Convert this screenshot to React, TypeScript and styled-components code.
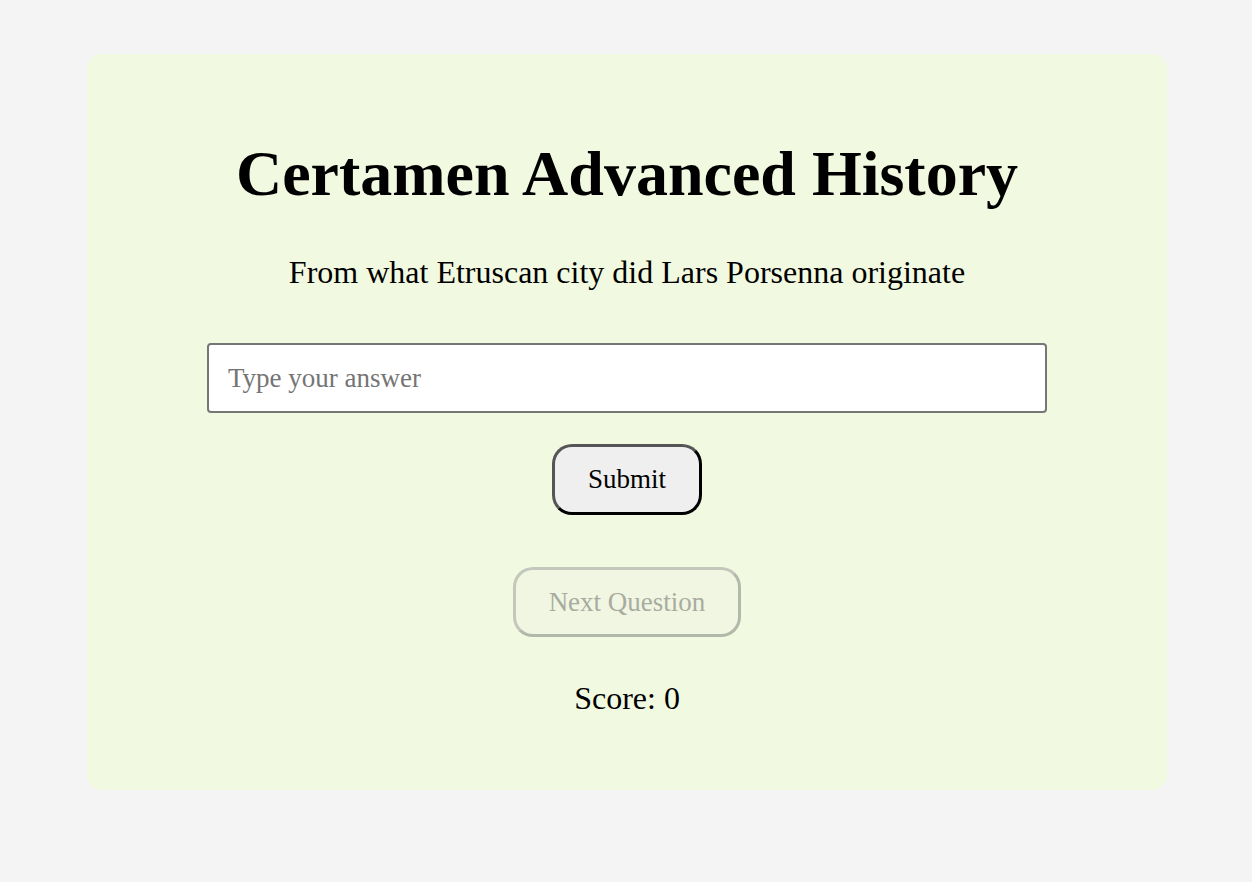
import styled, { createGlobalStyle } from 'styled-components';

const GlobalStyle = createGlobalStyle`
  html, body {
    margin: 0;
    padding: 0;
    background: #f4f4f4;
    font-family: "Liberation Serif", "Times New Roman", serif;
  }
`;

export default function App() {
  return (
    <>
      <GlobalStyle />
      <Page>
        <Card>
          <Title>Certamen Advanced History</Title>
          <Question>From what Etruscan city did Lars Porsenna originate</Question>
          <AnswerInput type="text" placeholder="Type your answer" />
          <ActionButton>Submit</ActionButton>
          <ActionButton disabled $spaced>Next Question</ActionButton>
          <Score>Score: 0</Score>
        </Card>
      </Page>
    </>
  );
}

const Page = styled.div`
  display: flex;
  justify-content: center;
  padding: 54px 0 94px 2px;
`;

const Card = styled.div`
  width: 1080px;
  box-sizing: border-box;
  background: #f2f9e1;
  border-radius: 15px;
  padding: 40px 40px 74px;
  display: flex;
  flex-direction: column;
  align-items: center;
`;

const Title = styled.h1`
  font-size: 64px;
  font-weight: bold;
  margin: 43px 0 0;
  line-height: 74px;
  color: #000;
`;

const Question = styled.p`
  font-size: 32px;
  margin: 43px 0 0;
  line-height: 36px;
  color: #000;
`;

const AnswerInput = styled.input`
  margin-top: 53px;
  width: 840px;
  height: 70px;
  box-sizing: border-box;
  border: 2px solid #767676;
  border-radius: 4px;
  background: #fff;
  padding: 0 19px;
  font-family: "Liberation Serif", "Times New Roman", serif;
  font-size: 27px;
  color: #000;
  outline: none;

  &::placeholder {
    color: #757575;
  }
`;

const ActionButton = styled.button<{ $spaced?: boolean }>`
  margin-top: ${p => (p.$spaced ? '52px' : '31px')};
  height: 71px;
  padding: 0 33px;
  box-sizing: border-box;
  border: 3px solid;
  border-color: #555 #000 #000 #555;
  border-radius: 20px;
  background: #efefef;
  font-family: "Liberation Serif", "Times New Roman", serif;
  font-size: 27px;
  color: #000;
  cursor: pointer;

  &:disabled {
    height: 70px;
    border-color: #c4c7bc #b4b8aa #b4b8aa #c4c7bc;
    background: #f1f6e3;
    color: #a8ac9f;
    cursor: default;
  }
`;

const Score = styled.p`
  margin: 43px 0 0;
  font-size: 32px;
  line-height: 36px;
  color: #000;
`;
